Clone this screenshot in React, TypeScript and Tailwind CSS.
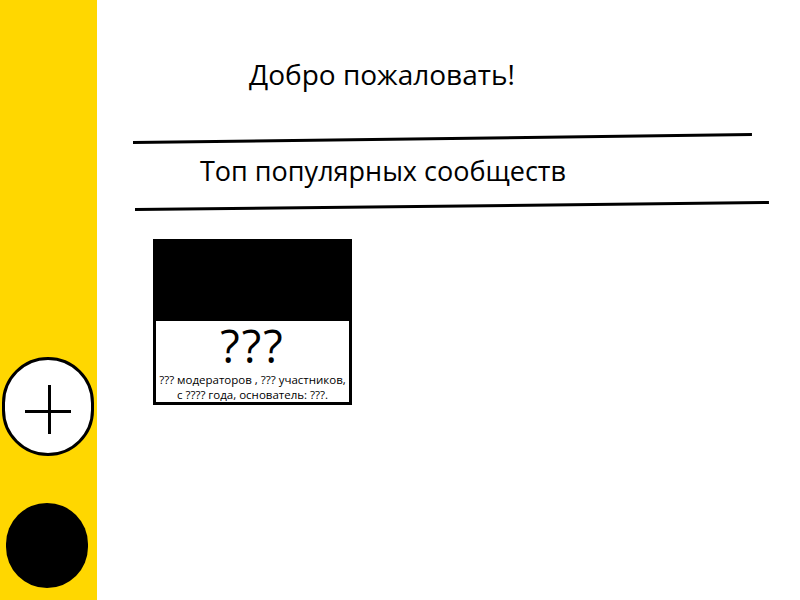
import React from 'react';

const font = { fontFamily: '"Open Sans", "Noto Sans", sans-serif' };

const Sidebar: React.FC = () => (
  <aside className="w-[97px] h-[600px] shrink-0 bg-[#FFD700] flex flex-col items-center pt-[357px]">
    <button className="relative w-[92px] h-[99px] ml-[-1px] rounded-full border-[3px] border-black bg-white">
      <span className="absolute left-[43px] top-[25px] w-[3px] h-[49px] bg-black" />
      <span className="absolute left-[20px] top-[50px] w-[46px] h-[3px] bg-black" />
    </button>
    <div className="mt-[47px] ml-[-4px] w-[82px] h-[85px] rounded-full bg-black" />
  </aside>
);

const Card: React.FC = () => (
  <div className="w-[199px] border-[3px] border-black bg-white">
    <div className="h-[79px] bg-black" />
    <div className="flex flex-col items-center">
      <div className="text-[45px] leading-[50px] tracking-[2px] text-black">???</div>
      <div className="text-[11.5px] leading-[15px] text-black text-center whitespace-nowrap mt-[1px]">
        ??? модераторов , ??? участников,<br />с ???? года, основатель: ???.
      </div>
    </div>
  </div>
);

export default function App() {
  return (
    <div className="flex w-[800px] h-[600px] bg-white overflow-hidden" style={font}>
      <Sidebar />
      <main className="flex-1 flex flex-col">
        <h1 className="mt-[55px] ml-[152px] text-[28px] leading-[38px] font-normal text-black">
          Добро пожаловать!
        </h1>
        <div className="mt-[48px] ml-[36px] w-[619px] h-[3px] bg-black -rotate-[0.74deg] origin-left" />
        <h2 className="mt-[9px] ml-[103px] text-[27px] leading-[36px] font-normal text-black">
          Топ популярных сообществ
        </h2>
        <div className="mt-[19px] ml-[38px] w-[634px] h-[3px] bg-black -rotate-[0.63deg] origin-left" />
        <div className="mt-[28px] ml-[56px]">
          <Card />
        </div>
      </main>
    </div>
  );
}
